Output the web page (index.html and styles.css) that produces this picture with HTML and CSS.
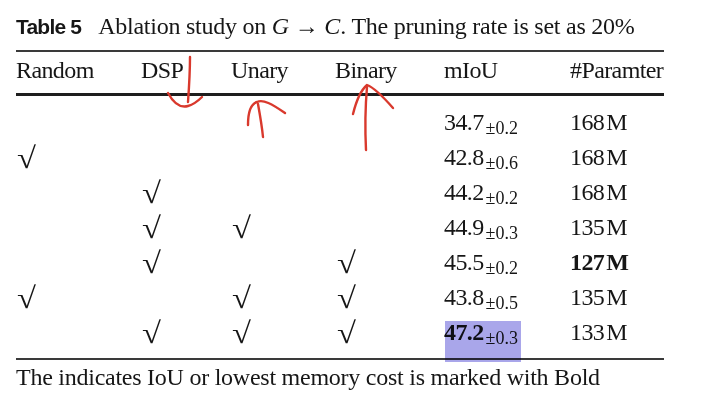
FILE: index.html
```html
<!DOCTYPE html>
<html>
<head>
<meta charset="utf-8">
<link rel="stylesheet" href="styles.css">
</head>
<body>
<div class="page">
  <div class="title"><span class="tlabel">Table 5</span><span class="tcap">Ablation study on <i>G</i> → <i>C</i>. The pruning rate is set as 20%</span></div>
  <div class="tbl">
    <div class="row head">
      <div>Random</div><div>DSP</div><div>Unary</div><div>Binary</div><div>mIoU</div><div>#Paramter</div>
    </div>
    <div class="body">
      <div class="row"><div></div><div></div><div></div><div></div><div>34.7<span class="sub">±0.2</span></div><div>168<span class="u">M</span></div></div>
      <div class="row"><div><span class="ck">√</span></div><div></div><div></div><div></div><div>42.8<span class="sub">±0.6</span></div><div>168<span class="u">M</span></div></div>
      <div class="row"><div></div><div><span class="ck">√</span></div><div></div><div></div><div>44.2<span class="sub">±0.2</span></div><div>168<span class="u">M</span></div></div>
      <div class="row"><div></div><div><span class="ck">√</span></div><div><span class="ck">√</span></div><div></div><div>44.9<span class="sub">±0.3</span></div><div>135<span class="u">M</span></div></div>
      <div class="row"><div></div><div><span class="ck">√</span></div><div></div><div><span class="ck b">√</span></div><div>45.5<span class="sub">±0.2</span></div><div><b>127<span class="u">M</span></b></div></div>
      <div class="row"><div><span class="ck">√</span></div><div></div><div><span class="ck">√</span></div><div><span class="ck b">√</span></div><div>43.8<span class="sub">±0.5</span></div><div>135<span class="u">M</span></div></div>
      <div class="row"><div></div><div><span class="ck">√</span></div><div><span class="ck">√</span></div><div><span class="ck b">√</span></div><div class="hlcell"><b>47.2</b><span class="sub">±0.3</span><span class="hl"></span></div><div>133<span class="u">M</span></div></div>
    </div>
  </div>
  <div class="caption">The indicates IoU or lowest memory cost is marked with Bold</div>
</div>
<svg class="marks" width="709" height="411" viewBox="0 0 709 411" xmlns="http://www.w3.org/2000/svg">
  <g fill="none" stroke="#d9392d" stroke-width="2.4" stroke-linecap="round" stroke-linejoin="round">
    <path d="M190,57 C190,72 189,88 188,102"/>
    <path d="M168,93 C174,104 181,108 188,106 C195,104 199,100 202,97"/>
    <path d="M248,125 C248,112 251,104 257,102 C263,99 272,104 285,113"/>
    <path d="M258,104 C260,115 262,127 263,137"/>
    <path d="M353,114 C356,102 361,90 367,85 C375,88 386,100 393,108"/>
    <path d="M367,87 C365,110 365,130 366,150"/>
  </g>
</svg>
</body>
</html>
```
FILE: styles.css
```css
html, body {
  margin: 0;
  padding: 0;
  background: #ffffff;
}
body {
  width: 709px;
  height: 411px;
  overflow: hidden;
  position: relative;
  font-family: "Liberation Serif", "Times New Roman", serif;
  color: #161616;
}
.page {
  padding-left: 16px;
  width: 648px;
}
.title {
  margin-top: 14px;
  height: 24px;
  line-height: 24px;
  font-size: 24px;
  letter-spacing: -0.25px;
  white-space: nowrap;
  display: flex;
  align-items: baseline;
}
.tlabel {
  font-family: "Liberation Sans", Arial, sans-serif;
  font-weight: bold;
  font-size: 21px;
  letter-spacing: -0.8px;
  margin-right: 17px;
}
.tcap i {
  letter-spacing: 0;
}
.tbl {
  margin-top: 12px;
  border-top: 2px solid #3a3a3a;
  border-bottom: 2px solid #3a3a3a;
}
.row {
  display: grid;
  grid-template-columns: 125px 90px 104px 109px 126px 94px;
  font-size: 24px;
  letter-spacing: -0.6px;
  white-space: nowrap;
}
.head {
  line-height: 24px;
  padding-top: 6px;
  padding-bottom: 11px;
  border-bottom: 3px solid #1e1e1e;
}
.body {
  padding-top: 9.4px;
  padding-bottom: 8px;
}
.body .row {
  height: 35px;
  line-height: 35px;
}
.sub {
  font-size: 18px;
  letter-spacing: 0;
  line-height: 0;
  vertical-align: -4px;
  margin-left: 2px;
}
.u {
  margin-left: 2px;
}
.ck {
  display: inline-block;
  font-size: 30px;
  line-height: 0;
  margin-left: 1px;
  vertical-align: -3px;
  transform: scaleX(1.15);
  transform-origin: left center;
}
.ck.b {
  margin-left: 2px;
}
.hlcell {
  position: relative;
}
.hl {
  position: absolute;
  left: 1px;
  top: 5.6px;
  width: 76px;
  height: 41px;
  background: #a9a6ea;
  mix-blend-mode: multiply;
}
.caption {
  margin-top: 4.6px;
  font-size: 24px;
  line-height: 24px;
  letter-spacing: -0.25px;
  white-space: nowrap;
}
.marks {
  position: absolute;
  left: 0;
  top: 0;
  pointer-events: none;
}
```
